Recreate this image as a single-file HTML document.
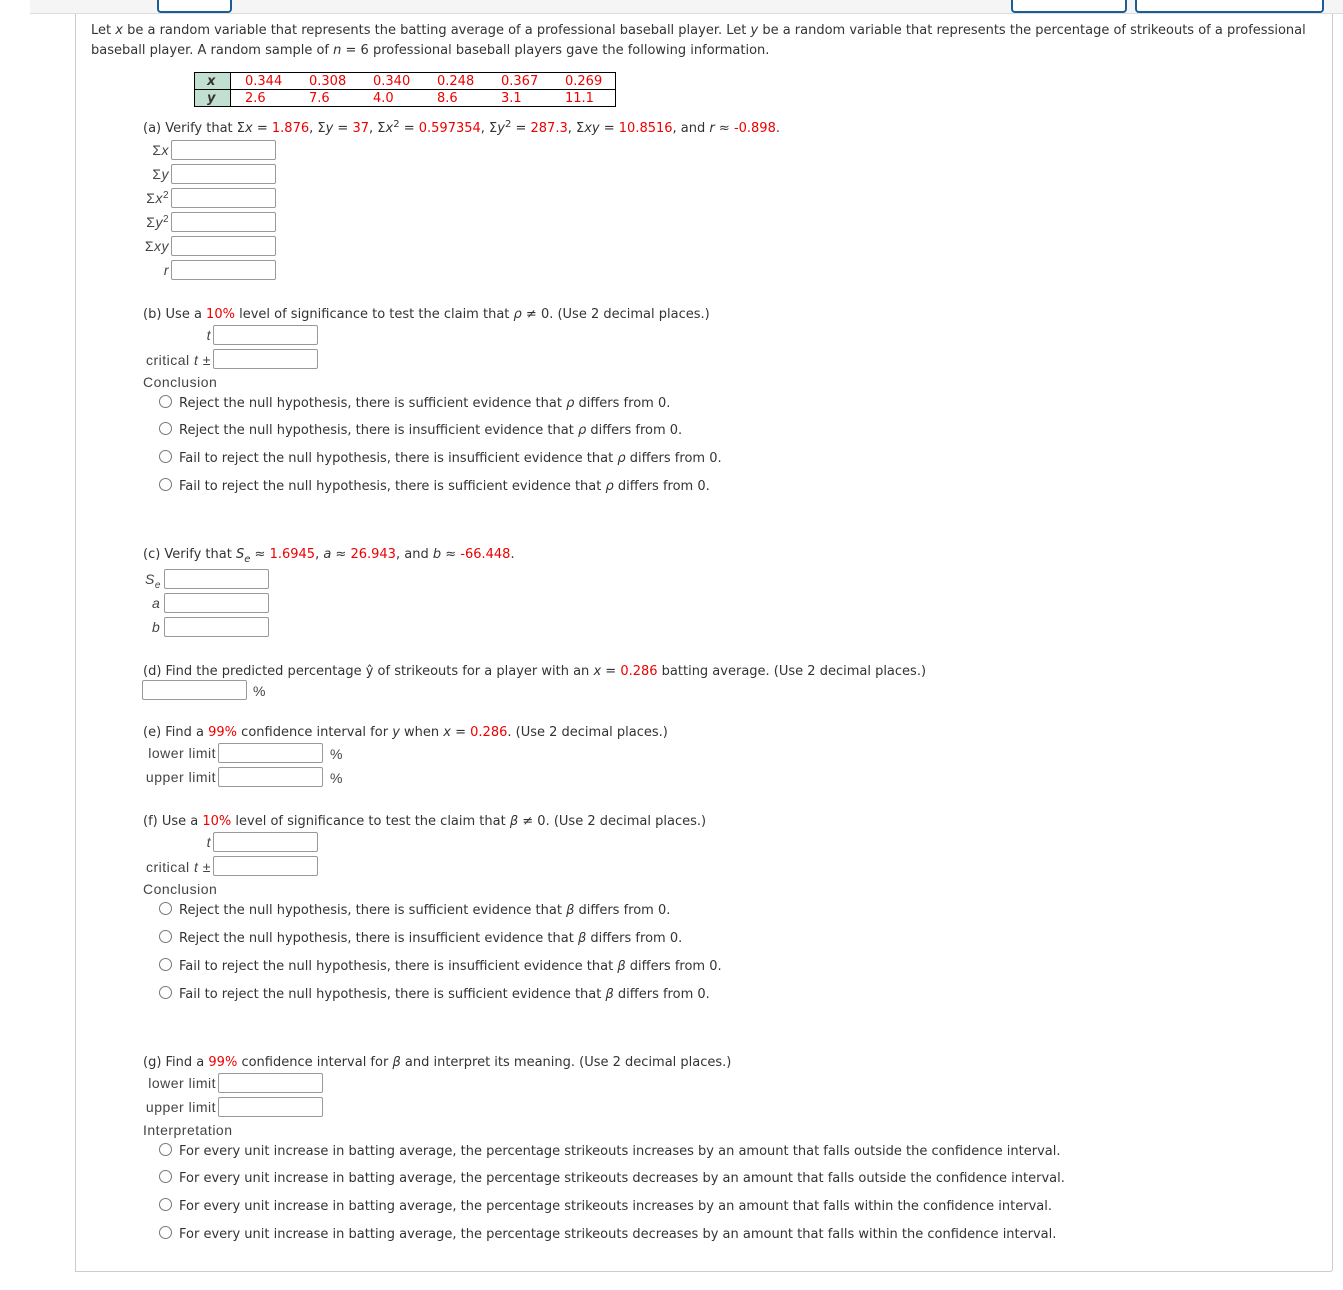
<!DOCTYPE html>
<html><head><meta charset="utf-8"><style>
body{margin:0;width:1343px;height:1290px;position:relative;background:#fff;font-family:"DejaVu Sans","Liberation Sans",sans-serif;color:#333;overflow:hidden}
.t{position:absolute;white-space:nowrap;font-size:13px;line-height:16px;margin-top:2px}
.l{position:absolute;white-space:nowrap;font-family:"Liberation Sans",sans-serif;font-size:14px;line-height:16px;color:#444;letter-spacing:0.5px}
.r{color:#e00}
.in{position:absolute;width:103px;height:18px;border:1px solid #999;border-radius:2px;background:#fff}
.rd{position:absolute;width:11px;height:11px;border:1px solid #777;border-radius:50%;background:#fff}
i{font-style:italic}
sup{font-size:10px;line-height:0;vertical-align:5px}
sub{font-size:10px;line-height:0;vertical-align:-4px}
.lr{text-align:right}
</style></head><body>
<div style="position:absolute;left:30px;top:0;width:1313px;height:13px;background:#f5f5f5;border-bottom:1px solid #ddd"></div>
<div style="position:absolute;left:157px;top:-4px;width:71px;height:13px;border:2px solid #1a5e95;border-radius:4px;background:#fff"></div>
<div style="position:absolute;left:1011px;top:-4px;width:112px;height:13px;border:2px solid #1a5e95;border-radius:4px;background:#fff"></div>
<div style="position:absolute;left:1135px;top:-4px;width:185px;height:13px;border:2px solid #1a5e95;border-radius:4px;background:#fff"></div>
<div style="position:absolute;left:75px;top:14px;width:1256px;height:1257px;border-left:1px solid #ccc;border-right:1px solid #ccc;border-bottom:1px solid #ccc;border-radius:0 0 3px 0"></div>

<div class="t" style="left:91px;top:21px">Let <i>x</i> be a random variable that represents the batting average of a professional baseball player. Let <i>y</i> be a random variable that represents the percentage of strikeouts of a professional</div>
<div class="t" style="left:91px;top:41px">baseball player. A random sample of <i>n</i> = 6 professional baseball players gave the following information.</div>

<div style="position:absolute;left:194px;top:72px;width:420px;height:33px;border:1px solid #000"></div>
<div style="position:absolute;left:195px;top:73px;width:35px;height:33px;background:#c2e0d2;border-right:1px solid #000"></div>
<div style="position:absolute;left:195px;top:89px;width:420px;height:1px;background:#000"></div>
<div class="t" style="left:207px;top:72px;font-weight:bold;font-style:italic">x</div>
<div class="t" style="left:207px;top:89px;font-weight:bold;font-style:italic">y</div>
<div class="t r" style="left:245px;top:72px">0.344</div><div class="t r" style="left:309px;top:72px">0.308</div><div class="t r" style="left:373px;top:72px">0.340</div><div class="t r" style="left:437px;top:72px">0.248</div><div class="t r" style="left:501px;top:72px">0.367</div><div class="t r" style="left:565px;top:72px">0.269</div>
<div class="t r" style="left:245px;top:89px">2.6</div><div class="t r" style="left:309px;top:89px">7.6</div><div class="t r" style="left:373px;top:89px">4.0</div><div class="t r" style="left:437px;top:89px">8.6</div><div class="t r" style="left:501px;top:89px">3.1</div><div class="t r" style="left:565px;top:89px">11.1</div>

<div class="t" style="left:143px;top:119px">(a) Verify that Σ<i>x</i> = <span class="r">1.876</span>, Σ<i>y</i> = <span class="r">37</span>, Σ<i>x</i><sup>2</sup> = <span class="r">0.597354</span>, Σ<i>y</i><sup>2</sup> = <span class="r">287.3</span>, Σ<i>xy</i> = <span class="r">10.8516</span>, and <i>r</i> ≈ <span class="r">-0.898</span>.</div>
<div class="l lr" style="right:1174px;top:142px">Σ<i>x</i></div><div class="in" style="left:171px;top:140px"></div>
<div class="l lr" style="right:1174px;top:166px">Σ<i>y</i></div><div class="in" style="left:171px;top:164px"></div>
<div class="l lr" style="right:1174px;top:190px">Σ<i>x</i><sup>2</sup></div><div class="in" style="left:171px;top:188px"></div>
<div class="l lr" style="right:1174px;top:214px">Σ<i>y</i><sup>2</sup></div><div class="in" style="left:171px;top:212px"></div>
<div class="l lr" style="right:1174px;top:238px">Σ<i>xy</i></div><div class="in" style="left:171px;top:236px"></div>
<div class="l lr" style="right:1174px;top:262px"><i>r</i></div><div class="in" style="left:171px;top:260px"></div>

<div class="t" style="left:143px;top:305px">(b) Use a <span class="r">10%</span> level of significance to test the claim that <i>ρ</i> ≠ 0. (Use 2 decimal places.)</div>
<div class="l lr" style="right:1132px;top:327px"><i>t</i></div><div class="in" style="left:213px;top:325px"></div>
<div class="l lr" style="right:1132px;top:352px">critical <i>t</i> ±</div><div class="in" style="left:213px;top:349px"></div>
<div class="l" style="left:143px;top:374px">Conclusion</div>
<div class="rd" style="left:159px;top:395px"></div><div class="t" style="left:179px;top:394px">Reject the null hypothesis, there is sufficient evidence that <i>ρ</i> differs from 0.</div>
<div class="rd" style="left:159px;top:422px"></div><div class="t" style="left:179px;top:421px">Reject the null hypothesis, there is insufficient evidence that <i>ρ</i> differs from 0.</div>
<div class="rd" style="left:159px;top:450px"></div><div class="t" style="left:179px;top:449px">Fail to reject the null hypothesis, there is insufficient evidence that <i>ρ</i> differs from 0.</div>
<div class="rd" style="left:159px;top:478px"></div><div class="t" style="left:179px;top:477px">Fail to reject the null hypothesis, there is sufficient evidence that <i>ρ</i> differs from 0.</div>

<div class="t" style="left:143px;top:545px">(c) Verify that <i>S</i><sub><i>e</i></sub> ≈ <span class="r">1.6945</span>, <i>a</i> ≈ <span class="r">26.943</span>, and <i>b</i> ≈ <span class="r">-66.448</span>.</div>
<div class="l" style="left:145px;top:571px"><i>S</i><sub><i>e</i></sub></div><div class="in" style="left:164px;top:569px"></div>
<div class="l" style="left:152px;top:595px"><i>a</i></div><div class="in" style="left:164px;top:593px"></div>
<div class="l" style="left:152px;top:619px"><i>b</i></div><div class="in" style="left:164px;top:617px"></div>

<div class="t" style="left:143px;top:662px">(d) Find the predicted percentage ŷ of strikeouts for a player with an <i>x</i> = <span class="r">0.286</span> batting average. (Use 2 decimal places.)</div>
<div class="in" style="left:142px;top:680px"></div><div class="l" style="left:253px;top:683px">%</div>

<div class="t" style="left:143px;top:723px">(e) Find a <span class="r">99%</span> confidence interval for <i>y</i> when <i>x</i> = <span class="r">0.286</span>. (Use 2 decimal places.)</div>
<div class="l lr" style="right:1127px;top:745px">lower limit</div><div class="in" style="left:218px;top:743px"></div><div class="l" style="left:330px;top:746px">%</div>
<div class="l lr" style="right:1127px;top:769px">upper limit</div><div class="in" style="left:218px;top:767px"></div><div class="l" style="left:330px;top:770px">%</div>

<div class="t" style="left:143px;top:812px">(f) Use a <span class="r">10%</span> level of significance to test the claim that <i>β</i> ≠ 0. (Use 2 decimal places.)</div>
<div class="l lr" style="right:1132px;top:834px"><i>t</i></div><div class="in" style="left:213px;top:832px"></div>
<div class="l lr" style="right:1132px;top:859px">critical <i>t</i> ±</div><div class="in" style="left:213px;top:856px"></div>
<div class="l" style="left:143px;top:881px">Conclusion</div>
<div class="rd" style="left:159px;top:902px"></div><div class="t" style="left:179px;top:901px">Reject the null hypothesis, there is sufficient evidence that <i>β</i> differs from 0.</div>
<div class="rd" style="left:159px;top:930px"></div><div class="t" style="left:179px;top:929px">Reject the null hypothesis, there is insufficient evidence that <i>β</i> differs from 0.</div>
<div class="rd" style="left:159px;top:958px"></div><div class="t" style="left:179px;top:957px">Fail to reject the null hypothesis, there is insufficient evidence that <i>β</i> differs from 0.</div>
<div class="rd" style="left:159px;top:986px"></div><div class="t" style="left:179px;top:985px">Fail to reject the null hypothesis, there is sufficient evidence that <i>β</i> differs from 0.</div>

<div class="t" style="left:143px;top:1053px">(g) Find a <span class="r">99%</span> confidence interval for <i>β</i> and interpret its meaning. (Use 2 decimal places.)</div>
<div class="l lr" style="right:1127px;top:1075px">lower limit</div><div class="in" style="left:218px;top:1073px"></div>
<div class="l lr" style="right:1127px;top:1099px">upper limit</div><div class="in" style="left:218px;top:1097px"></div>
<div class="l" style="left:143px;top:1122px">Interpretation</div>
<div class="rd" style="left:159px;top:1143px"></div><div class="t" style="left:179px;top:1142px">For every unit increase in batting average, the percentage strikeouts increases by an amount that falls outside the confidence interval.</div>
<div class="rd" style="left:159px;top:1170px"></div><div class="t" style="left:179px;top:1169px">For every unit increase in batting average, the percentage strikeouts decreases by an amount that falls outside the confidence interval.</div>
<div class="rd" style="left:159px;top:1198px"></div><div class="t" style="left:179px;top:1197px">For every unit increase in batting average, the percentage strikeouts increases by an amount that falls within the confidence interval.</div>
<div class="rd" style="left:159px;top:1226px"></div><div class="t" style="left:179px;top:1225px">For every unit increase in batting average, the percentage strikeouts decreases by an amount that falls within the confidence interval.</div>
</body></html>
